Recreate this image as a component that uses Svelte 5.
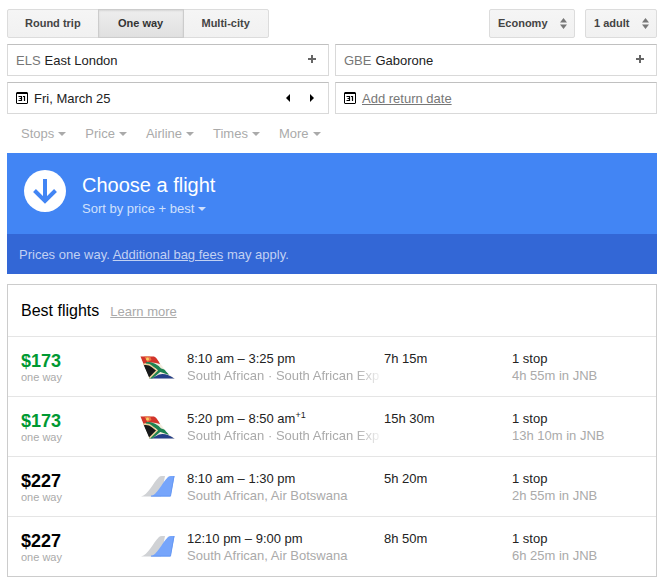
<script>
  let trip = $state('One way');
  let cabin = $state('Economy');
  let passengers = $state('1 adult');
  let origin = $state('East London');
  let destination = $state('Gaborone');
  let date = $state('Fri, March 25');

  const trips = ['Round trip', 'One way', 'Multi-city'];
  const filters = ['Stops', 'Price', 'Airline', 'Times', 'More'];

  const flights = [
    { price: '$173', best: true, logo: 'saa', time: '8:10 am – 3:25 pm', carrier: 'South African · South African Exp', duration: '7h 15m', stops: '1 stop', layover: '4h 55m in JNB' },
    { price: '$173', best: true, logo: 'saa', time: '5:20 pm – 8:50 am', nextDay: '+1', carrier: 'South African · South African Exp', duration: '15h 30m', stops: '1 stop', layover: '13h 10m in JNB' },
    { price: '$227', logo: 'multi', time: '8:10 am – 1:30 pm', carrier: 'South African, Air Botswana', duration: '5h 20m', stops: '1 stop', layover: '2h 55m in JNB' },
    { price: '$227', logo: 'multi', time: '12:10 pm – 9:00 pm', carrier: 'South African, Air Botswana', duration: '8h 50m', stops: '1 stop', layover: '6h 25m in JNB' }
  ];
</script>

{#snippet calendar()}
  <svg class="calendar" width="12" height="12" viewBox="0 0 12 12" aria-hidden="true">
    <path d="M1 0h10l1 1v10l-1 1H1l-1-1V1zM1 2v9h10V2z" fill="#000" fill-rule="evenodd" />
    <path d="M2.500 4.500h3v4h-3M3.500 6.500h2M7 4.500h1.500V9" fill="none" stroke="#000" stroke-width="1.200" />
  </svg>
{/snippet}

{#snippet plus()}
  <svg width="8" height="8" viewBox="0 0 8 8" aria-hidden="true">
    <path d="M3 0h2v3h3v2H5v3H3V5H0V3h3z" fill="#666" />
  </svg>
{/snippet}

{#snippet updown()}
  <svg class="updown" width="7" height="11" viewBox="0 0 7 11" aria-hidden="true">
    <path d="M0 4.500L3.500 0 7 4.500zM0 6.500h7L3.500 11z" fill="#777" />
  </svg>
{/snippet}

<main>
  <div class="topbar">
    <div class="trips">
      {#each trips as name}
        <button class:active={trip === name} aria-pressed={trip === name} onclick={() => (trip = name)}>{name}</button>
      {/each}
    </div>
    <div class="options">
      <label class="picker cabin">
        <select bind:value={cabin} aria-label="Cabin class">
          <option>Economy</option>
          <option>Business</option>
        </select>
        {@render updown()}
      </label>
      <label class="picker passengers">
        <select bind:value={passengers} aria-label="Passengers">
          <option>1 adult</option>
          <option>2 adults</option>
        </select>
        {@render updown()}
      </label>
    </div>
  </div>

  <div class="fields">
    <div class="field">
      <label for="origin">ELS</label>
      <input id="origin" bind:value={origin} />
      <button class="add" aria-label="Add origin airport">{@render plus()}</button>
    </div>
    <div class="field">
      <label for="destination">GBE</label>
      <input id="destination" bind:value={destination} />
      <button class="add" aria-label="Add destination airport">{@render plus()}</button>
    </div>
    <div class="field">
      {@render calendar()}
      <input class="date" aria-label="Departure date" bind:value={date} />
      <button class="step" aria-label="Previous day">
        <svg width="4" height="8" viewBox="0 0 4 8"><path d="M4 0v8L0 4z" /></svg>
      </button>
      <button class="step" aria-label="Next day">
        <svg width="4" height="8" viewBox="0 0 4 8"><path d="M0 0v8l4-4z" /></svg>
      </button>
    </div>
    <div class="field">
      {@render calendar()}
      <a class="return" href="#return">Add return date</a>
    </div>
  </div>

  <div class="filters">
    {#each filters as filter}
      <button>{filter}<span class="caret"></span></button>
    {/each}
  </div>

  <section class="banner">
    <div class="choose">
      <svg width="42" height="42" viewBox="0 0 42 42" aria-hidden="true">
        <circle cx="21" cy="21" r="21" fill="#fff" />
        <path d="M21 9v22M10.500 20.500L21 31l10.500-10.500" fill="none" stroke="#4285f4" stroke-width="4" />
      </svg>
      <div>
        <h1>Choose a flight</h1>
        <button class="sort">Sort by price + best<span class="caret"></span></button>
      </div>
    </div>
    <p class="notice">Prices one way. <a href="#fees">Additional bag fees</a> may apply.</p>
  </section>

  <section class="results">
    <header>
      <h2>Best flights</h2>
      <a href="#more">Learn more</a>
    </header>
    <table aria-label="Best flights">
      <colgroup>
        <col class="col-price" />
        <col class="col-logo" />
        <col />
        <col class="col-duration" />
        <col class="col-stops" />
      </colgroup>
      <tbody>
        {#each flights as flight}
          <tr>
            <td class="price">
              <strong class:best={flight.best}>{flight.price}</strong>
              <small>one way</small>
            </td>
            <td class="logo">
              {#if flight.logo === 'saa'}
                <svg width="35" height="24" viewBox="0 0 35 24" aria-hidden="true">
                  <clipPath id="tail"><path d="M0 1.500h14q2 .5 4 4l8 11q3 4 9 7H9.500z" /></clipPath>
                  <g clip-path="url(#tail)">
                    <path d="M0 0h35v24H0z" fill="#f3ecdf" />
                    <path d="M0 0h16l4 9Q12 6 3.500 9z" fill="#d2342b" />
                    <path d="M4 1h6l1.500 4-4 2z" fill="#ec7446" />
                    <circle cx="7.500" cy="4" r="1.500" fill="#f6cf62" />
                    <path d="M19 19.500q7-2 16 4.500H10z" fill="#243f88" />
                    <path d="M6 9q8-1 14 6l9 3M20 15L9 24" fill="none" stroke="#1d8352" stroke-width="3.500" />
                    <path d="M3 9.500q5-1 9 2l5 4-8 8z" fill="#17191a" />
                    <path d="M3 9.500q6-1 9 2l5 4-8 8" fill="none" stroke="#ecd09a" stroke-width="1.500" />
                  </g>
                </svg>
              {:else}
                <svg width="35" height="24" viewBox="0 0 35 24" aria-hidden="true">
                  <path d="M1 21.500C8 20 13 8 19 2q1-1 3-1h3l-4 20.500z" fill="#d0d2d5" />
                  <path d="M10.500 21.500C17 20 22 8 28 2q1-1 3-1h3.500l-4 20.500z" fill="#76a5fb" />
                  <path d="M11 21h19.500L34 1" fill="none" stroke="#6799f4" />
                </svg>
              {/if}
            </td>
            <td class="trip">
              <div>{flight.time}{#if flight.nextDay}<sup>{flight.nextDay}</sup>{/if}</div>
              <div class="muted" class:faded={flight.logo === 'saa'}>{flight.carrier}</div>
            </td>
            <td>{flight.duration}</td>
            <td>
              <div>{flight.stops}</div>
              <div class="muted">{flight.layover}</div>
            </td>
          </tr>
        {/each}
      </tbody>
    </table>
  </section>
</main>

<style>
  :global(body) {
    margin: 0;
    background: #fff;
  }

  main {
    padding: 9px 9px 6px 7px;
    font-family: "Liberation Sans", Arial, sans-serif;
    font-size: 13px;
    line-height: 17px;
    color: #222;
  }

  main * {
    box-sizing: border-box;
  }

  button, input, select {
    font: inherit;
    color: inherit;
    margin: 0;
    padding: 0;
    border: 0;
    background: none;
  }

  button {
    cursor: pointer;
  }

  h1, h2, p {
    margin: 0;
    font-weight: normal;
  }

  .topbar {
    display: flex;
    justify-content: space-between;
    margin-bottom: 6px;
    font-size: 11px;
    font-weight: bold;
    color: #444;
  }

  .trips, .options {
    display: flex;
  }

  .options {
    gap: 10px;
  }

  .trips button, .picker {
    height: 29px;
    border: 1px solid #dcdcdc;
    background: linear-gradient(#f5f5f5, #f1f1f1);
  }

  .trips button {
    min-width: 86px;
    padding: 0 17px;
  }

  .trips button + button {
    margin-left: -1px;
  }

  .trips button:first-child {
    border-radius: 2px 0 0 2px;
  }

  .trips button:last-child {
    border-radius: 0 2px 2px 0;
  }

  .trips .active {
    position: relative;
    border-color: #ccc;
    color: #333;
    background: linear-gradient(#eee, #e0e0e0);
    box-shadow: inset 0 1px 2px rgba(0, 0, 0, 0.1);
  }

  .picker {
    position: relative;
    border-radius: 2px;
  }

  .picker select {
    appearance: none;
    width: 100%;
    height: 27px;
    padding: 0 8px;
  }

  .cabin {
    width: 86px;
  }

  .passengers {
    width: 72px;
  }

  .updown {
    position: absolute;
    right: 7px;
    top: 8px;
    pointer-events: none;
  }

  .fields {
    display: grid;
    grid-template-columns: 1fr 1fr;
    gap: 6px;
  }

  .field {
    display: flex;
    align-items: center;
    height: 32px;
    padding: 0 8px;
    border: 1px solid #d9d9d9;
    border-top-color: #c0c0c0;
  }

  .field label {
    color: #777;
  }

  .field input {
    flex: 1;
    min-width: 0;
    margin-left: 4px;
    outline: none;
  }

  .field .date, .return {
    margin-left: 6px;
  }

  .return {
    color: #777;
  }

  .add {
    display: flex;
    padding: 0 4px 2px;
  }

  .step {
    display: flex;
    padding: 0 10px;
  }

  .step:last-child {
    padding: 0 6px 0 10px;
  }

  .filters {
    display: flex;
    gap: 19px;
    padding: 11px 14px;
    color: #aaa;
  }

  .caret {
    display: inline-block;
    margin-left: 4px;
    border: 4px solid transparent;
    border-top-color: currentColor;
    border-bottom: 0;
    vertical-align: 2px;
  }

  .banner {
    background: #4285f4;
    color: #fff;
  }

  .choose {
    display: flex;
    gap: 16px;
    padding: 17px;
  }

  .choose h1 {
    margin-top: 3px;
    font-size: 20px;
    line-height: 24px;
  }

  .sort {
    display: block;
    margin-top: 3px;
    color: #d0e0fc;
  }

  .notice {
    padding: 12px 12px 11px;
    background: #3367d6;
    color: #c2d1f3;
  }

  .notice a {
    color: inherit;
  }

  .results {
    margin-top: 10px;
    border: 1px solid #ccc;
  }

  .results header {
    display: flex;
    align-items: baseline;
    gap: 11px;
    padding: 16px 13px 15px;
  }

  h2 {
    font-size: 16px;
    line-height: 20px;
    color: #000;
  }

  header a {
    color: #aaa;
  }

  table {
    width: 100%;
    table-layout: fixed;
    border-collapse: collapse;
  }

  .col-price {
    width: 132px;
  }

  .col-logo {
    width: 47px;
  }

  .col-duration {
    width: 128px;
  }

  .col-stops {
    width: 144px;
  }

  td {
    height: 60px;
    padding: 13px 0 0;
    border-top: 1px solid #e5e5e5;
    vertical-align: top;
  }

  tr:last-child td {
    height: 59px;
  }

  .price {
    padding: 15px 0 0 13px;
  }

  .price strong, .price small {
    display: block;
  }

  .price strong {
    font-size: 18px;
    line-height: 19px;
    color: #000;
  }

  .price .best {
    color: #093;
  }

  .price small {
    font-size: 11px;
    line-height: 12px;
    color: #aaa;
  }

  .logo {
    padding-top: 18px;
  }

  .logo svg {
    display: block;
  }

  sup {
    font-size: 9px;
    line-height: 0;
  }

  .muted {
    color: #aaa;
  }

  .faded {
    white-space: nowrap;
    mask-image: linear-gradient(to left, transparent, #000 28px);
  }
</style>
